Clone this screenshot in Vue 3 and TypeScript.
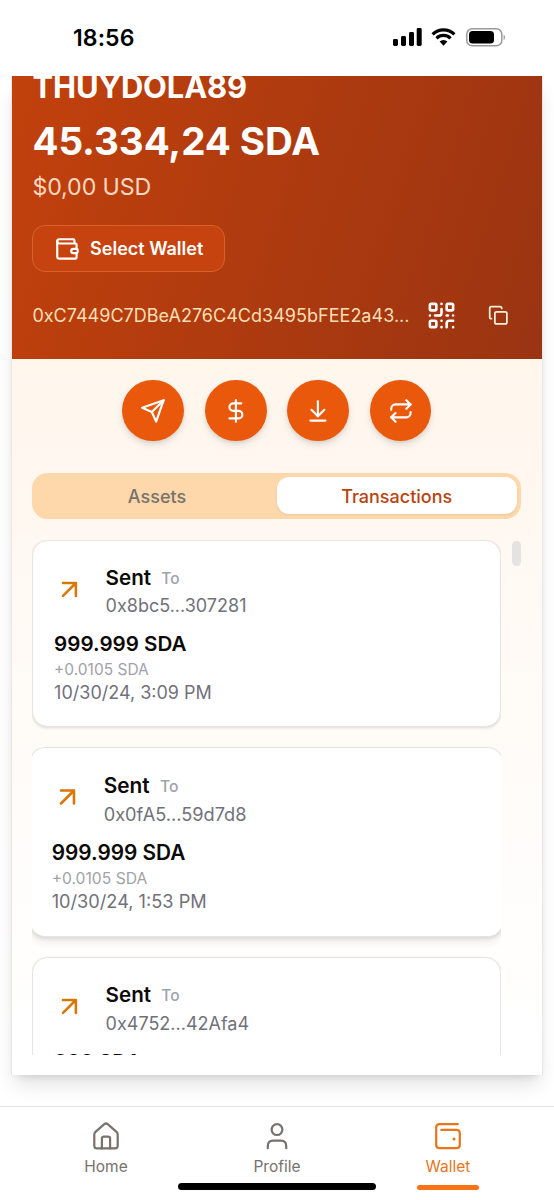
<script setup lang="ts">
interface Transaction {
  hash: string
  amount: string
  fee?: string
  date?: string
  raised?: boolean
}

interface Action {
  name: string
  paths: string[]
}

const transactions: Transaction[] = [
  { hash: '0x8bc5...307281', amount: '999.999 SDA', fee: '+0.0105 SDA', date: '10/30/24, 3:09 PM' },
  { hash: '0x0fA5...59d7d8', amount: '999.999 SDA', fee: '+0.0105 SDA', date: '10/30/24, 1:53 PM', raised: true },
  { hash: '0x4752...42Afa4', amount: '999 SDA' },
]

const actions: Action[] = [
  { name: 'send', paths: ['M22 2 11 13', 'M22 2l-7 20-4-9-9-4Z'] },
  { name: 'buy', paths: ['M12 2v20', 'M17 5H9.5a3.5 3.5 0 0 0 0 7h5a3.5 3.5 0 0 1 0 7H6'] },
  { name: 'receive', paths: ['M12 17V3', 'm6 11 6 6 6-6', 'M19 21H5'] },
  { name: 'swap', paths: ['m17 2 4 4-4 4', 'M3 11v-1a4 4 0 0 1 4-4h14', 'm7 22-4-4 4-4', 'M21 13v1a4 4 0 0 1-4 4H3'] },
]
</script>

<template>
  <div class="screen">
    <header class="status">
      <span class="time">18:56</span>
      <div class="indicators">
        <svg class="signal" viewBox="0 0 29 18">
          <rect x="0" y="11" width="5" height="7" rx="1.4" />
          <rect x="8" y="8" width="5" height="10" rx="1.4" />
          <rect x="16" y="4" width="5" height="14" rx="1.4" />
          <rect x="23.7" y="0" width="5" height="18" rx="1.4" />
        </svg>
        <svg class="wifi" viewBox="0 0 25 18">
          <path d="M1.6 6.3a15.6 15.6 0 0 1 21.8 0" />
          <path d="M5.5 10.3a10 10 0 0 1 14 0" />
          <path class="dot" d="M8.6 13.5a5.6 5.6 0 0 1 7.8 0L12.5 17.8Z" />
        </svg>
        <svg class="battery" viewBox="0 0 40 19">
          <rect class="shell" x=".8" y=".8" width="35" height="17" rx="5.4" />
          <rect x="3" y="3" width="25" height="12.6" rx="3.6" />
          <path class="cap" d="M37.6 6.5c1.8.6 1.8 5 0 5.6Z" />
        </svg>
      </div>
    </header>

    <main class="stage">
      <section class="wallet">
        <div class="hero">
          <h1 class="owner">THUYDOLA89</h1>
          <p class="balance">45.334,24 SDA</p>
          <p class="fiat">$0,00 USD</p>
          <button class="select">
            <svg class="icon" viewBox="0 0 24 24">
              <path d="M19 7V4a1 1 0 0 0-1-1H5a2 2 0 0 0 0 4h15a1 1 0 0 1 1 1v4h-3a2 2 0 0 0 0 4h3a1 1 0 0 0 1-1v-2a1 1 0 0 0-1-1" />
              <path d="M3 5v14a2 2 0 0 0 2 2h15a1 1 0 0 0 1-1v-4" />
            </svg>
            <span>Select Wallet</span>
          </button>
          <div class="address-row">
            <span class="address">0xC7449C7DBeA276C4Cd3495bFEE2a43...</span>
            <svg class="icon qr" viewBox="0 0 24 24">
              <rect width="5" height="5" x="3" y="3" rx="1" />
              <rect width="5" height="5" x="16" y="3" rx="1" />
              <rect width="5" height="5" x="3" y="16" rx="1" />
              <path d="M21 16h-3a2 2 0 0 0-2 2v3M21 21v.01M12 7v3a2 2 0 0 1-2 2H7M3 12h.01M12 3h.01M12 16v.01M16 12h1M21 12v.01M12 21v-.01" />
            </svg>
            <svg class="icon copy" viewBox="0 0 24 24">
              <rect width="14" height="14" x="8" y="8" rx="2" />
              <path d="M4 16c-1.1 0-2-.9-2-2V4c0-1.1.9-2 2-2h10c1.1 0 2 .9 2 2" />
            </svg>
          </div>
        </div>

        <div class="body">
          <div class="actions">
            <button v-for="action in actions" :key="action.name" class="action">
              <svg class="icon" viewBox="0 0 24 24">
                <path v-for="d in action.paths" :key="d" :d="d" />
              </svg>
            </button>
          </div>

          <div class="tabs">
            <button class="tab">Assets</button>
            <button class="tab active">Transactions</button>
          </div>

          <div class="scroller">
            <div class="list">
              <article v-for="tx in transactions" :key="tx.hash" class="tx" :class="{ raised: tx.raised }">
                <div class="tx-head">
                  <svg class="icon arrow" viewBox="0 0 24 24">
                    <path d="M7 7h10v10M7 17 17 7" />
                  </svg>
                  <div>
                    <div class="kind"><span>Sent</span><span class="to">To</span></div>
                    <div class="hash">{{ tx.hash }}</div>
                  </div>
                </div>
                <div class="amount">{{ tx.amount }}</div>
                <div v-if="tx.fee" class="fee">{{ tx.fee }}</div>
                <div v-if="tx.date" class="date">{{ tx.date }}</div>
              </article>
            </div>
            <div class="thumb"></div>
          </div>
        </div>
      </section>
    </main>

    <nav class="nav">
      <a class="nav-item">
        <svg class="nav-icon" viewBox="0 0 28 28">
          <path d="M2.300 12.400c0-1.100.4-1.900 1.200-2.600l8.800-7.600c1.100-.9 2.300-.9 3.400 0l8.800 7.600c.8.7 1.200 1.500 1.200 2.600v11.400c0 1.500-1.100 2.600-2.600 2.600H4.900c-1.500 0-2.600-1.100-2.600-2.600Z" />
          <path d="M9.900 26.400v-9.800c0-1.200.8-2 2-2h4.200c1.200 0 2 .8 2 2v9.800" />
        </svg>
        <span>Home</span>
      </a>
      <a class="nav-item">
        <svg class="nav-icon" viewBox="0 0 28 28">
          <circle cx="14" cy="7.600" r="5.400" />
          <path d="M4.800 26.200v-2.200c0-3.300 1.900-5.400 5.200-5.400h8c3.300 0 5.200 2.100 5.200 5.400v2.200" />
        </svg>
        <span>Profile</span>
      </a>
      <a class="nav-item current">
        <svg class="nav-icon" viewBox="0 0 28 28">
          <path d="M23.800 2.200H5.600c-2.100 0-3.400 1.300-3.400 3.400v17.200c0 2.100 1.300 3.400 3.400 3.400h16.800c2.100 0 3.400-1.300 3.400-3.400V11.200c0-2.100-1.300-3.400-3.400-3.400H7.300" />
          <circle class="clasp" cx="20" cy="17" r="1.500" />
        </svg>
        <span>Wallet</span>
        <i class="marker"></i>
      </a>
      <i class="home-bar"></i>
    </nav>
  </div>
</template>

<style>
body {
  margin: 0;
  background: #fff;
}
</style>

<style scoped>
.screen {
  display: flex;
  flex-direction: column;
  width: 554px;
  height: 1200px;
  overflow: hidden;
  background: #fff;
  font-family: Inter, "Liberation Sans", sans-serif;
  color: #0c0a09;
}
h1, p {
  margin: 0;
}
button {
  border: 0;
  padding: 0;
  font: inherit;
  color: inherit;
  background: none;
}
.icon {
  display: block;
  flex: none;
  width: 25.8px;
  height: 25.8px;
  fill: none;
  stroke: currentColor;
  stroke-width: 2;
  stroke-linecap: round;
  stroke-linejoin: round;
}
.status {
  display: flex;
  flex: none;
  justify-content: space-between;
  box-sizing: border-box;
  height: 76px;
  padding: 24px 48px 0 73px;
}
.time {
  font-size: 23px;
  line-height: 28px;
  font-weight: 600;
  letter-spacing: 0.1px;
  color: #000;
}
.indicators {
  display: flex;
  align-items: flex-start;
  padding-top: 4px;
}
.signal {
  width: 29px;
  height: 18px;
  margin-right: 9px;
}
.wifi {
  width: 25px;
  height: 18px;
  margin-right: 10px;
  fill: none;
  stroke: #000;
  stroke-width: 3.2;
}
.wifi .dot {
  fill: #000;
  stroke: none;
}
.battery {
  width: 40px;
  height: 19px;
}
.battery .shell {
  fill: none;
  stroke: #999;
  stroke-width: 1.5;
}
.battery .cap {
  fill: #999;
}
.stage {
  flex: none;
  box-sizing: border-box;
  height: 1030px;
  padding: 0 11px;
  overflow: hidden;
}
.wallet {
  display: flex;
  flex-direction: column;
  box-sizing: border-box;
  height: 999px;
  border: 1px solid #e9e6e4;
  border-width: 0 1px;
  background: linear-gradient(#fff7ed 0, #fff6ec 283px, #fffaf5 560px, #fff 960px);
  box-shadow: 0 13px 19px -4px rgba(0, 0, 0, 0.12), 0 5px 8px -5px rgba(0, 0, 0, 0.14);
}
.hero {
  flex: none;
  box-sizing: border-box;
  height: 283px;
  padding: 0 20.4px;
  overflow: hidden;
  background: linear-gradient(108deg, #c2410c, #9a3412);
  color: #fff;
}
.owner {
  margin-top: -10px;
  font-size: 30.9px;
  line-height: 41.2px;
  font-weight: 700;
  letter-spacing: -0.1px;
}
.balance {
  margin-top: 11px;
  font-size: 38.6px;
  line-height: 46px;
  font-weight: 700;
  letter-spacing: -0.08px;
}
.fiat {
  margin-top: 4.5px;
  font-size: 23.2px;
  line-height: 36px;
  letter-spacing: -0.1px;
  color: #fed7c0;
}
.select {
  display: flex;
  align-items: center;
  gap: 10.3px;
  box-sizing: border-box;
  width: 193px;
  height: 46.4px;
  margin-top: 20.5px;
  padding-left: 20.6px;
  border: 1.3px solid #d9622b;
  border-radius: 13px;
  background: #c6430f;
  font-size: 18px;
  font-weight: 600;
}
.address-row {
  display: flex;
  align-items: center;
  height: 36px;
  margin-top: 26px;
}
.address {
  width: 393.6px;
  font-size: 18px;
  letter-spacing: 0.02px;
  white-space: nowrap;
  color: #fedfb5;
}
.qr {
  width: 31px;
  height: 31px;
}
.copy {
  width: 20.6px;
  height: 20.6px;
  margin-left: 31px;
  color: #ffeede;
}
.body {
  display: flex;
  flex: 1;
  flex-direction: column;
  min-height: 0;
  padding: 20.6px 20.6px 20px 20.3px;
}
.actions {
  display: flex;
  flex: none;
  justify-content: center;
  gap: 20.6px;
}
.action {
  display: grid;
  place-items: center;
  width: 61.8px;
  height: 61.8px;
  border-radius: 50%;
  background: #ea580c;
  color: #fff;
  box-shadow: 0 4px 8px -1px rgba(0, 0, 0, 0.12), 0 2px 4px -1px rgba(0, 0, 0, 0.1);
}
.tabs {
  display: grid;
  flex: none;
  grid-template-columns: 1fr 1fr;
  box-sizing: border-box;
  height: 46px;
  margin-top: 31.3px;
  padding: 4.8px;
  border-radius: 15.5px;
  background: #fed7aa;
}
.tab {
  padding-top: 1px;
  border-radius: 12px;
  font-size: 18px;
  font-weight: 500;
  color: #78716c;
}
.tab.active {
  background: #fff;
  color: #b8430f;
  box-shadow: 0 1px 2px rgba(0, 0, 0, 0.08);
}
.scroller {
  display: flex;
  flex: 1;
  justify-content: space-between;
  min-height: 0;
  margin-top: 21px;
}
.list {
  display: flex;
  flex-direction: column;
  gap: 21px;
  width: 469px;
  overflow: hidden;
}
.tx {
  flex: none;
  box-sizing: border-box;
  height: 187.6px;
  padding: 21.4px 20.8px 0;
  border: 1px solid #e7e5e4;
  border-radius: 15.5px;
  background: #fff;
  box-shadow: 0 1px 3px rgba(0, 0, 0, 0.14);
}
.tx.raised {
  transform: scale(1.01);
  box-shadow: 0 5px 8px -1px rgba(0, 0, 0, 0.1), 0 2px 4px -2px rgba(0, 0, 0, 0.14);
}
.tx-head {
  display: flex;
  align-items: center;
  gap: 20.6px;
  margin-bottom: 10.3px;
}
.arrow {
  width: 30.9px;
  height: 30.9px;
  margin-top: -2px;
  color: #d97706;
}
.kind {
  display: flex;
  align-items: center;
  gap: 10.3px;
  font-size: 20.6px;
  line-height: 30.4px;
  font-weight: 600;
}
.to {
  padding-top: 2px;
  font-size: 15.5px;
  font-weight: 500;
  color: #a1a1aa;
}
.hash, .date {
  font-size: 18px;
  line-height: 24.6px;
  color: #71717a;
}
.amount {
  font-size: 20.6px;
  line-height: 30.9px;
  font-weight: 600;
}
.fee {
  font-size: 15.5px;
  line-height: 20.4px;
  color: #a1a1aa;
}
.thumb {
  width: 9px;
  height: 25.5px;
  margin-top: 1px;
  border-radius: 5px;
  background: #e5e3e2;
}
.nav {
  position: relative;
  display: grid;
  flex: none;
  grid-template-columns: repeat(3, 171px);
  justify-content: center;
  box-sizing: border-box;
  height: 94px;
  border-top: 1px solid #e3e3e3;
  background: #fff;
}
.nav-item {
  display: flex;
  flex-direction: column;
  align-items: center;
  font-size: 15.5px;
  line-height: 20px;
  color: #78716c;
}
.nav-icon {
  width: 28px;
  height: 28px;
  margin: 14.5px 0 7px;
  fill: none;
  stroke: currentColor;
  stroke-width: 2.2;
  stroke-linecap: round;
  stroke-linejoin: round;
}
.clasp {
  fill: currentColor;
  stroke: none;
}
.current {
  color: #ea741b;
}
.marker {
  width: 62px;
  height: 5.5px;
  margin-top: 8px;
  border-radius: 3px;
  background: #f97316;
}
.home-bar {
  position: absolute;
  bottom: 10.5px;
  left: 178px;
  width: 198px;
  height: 6.5px;
  border-radius: 4px;
  background: #000;
}
</style>
